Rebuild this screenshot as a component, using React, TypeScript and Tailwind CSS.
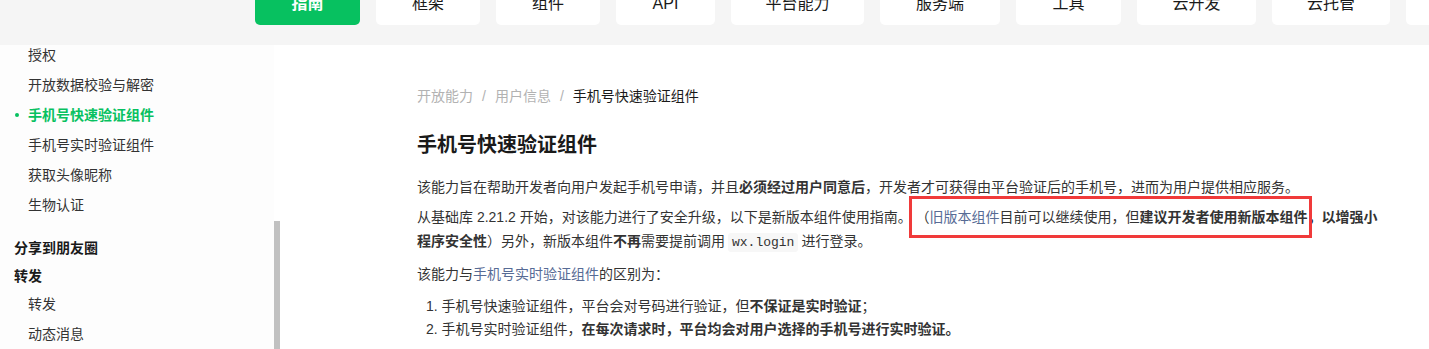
import React from "react";

const navItems = [
  { label: "指南", w: "w-[105px]", active: true },
  { label: "框架", w: "w-[104px]" },
  { label: "组件", w: "w-[104px]" },
  { label: "API", w: "w-[99px]" },
  { label: "平台能力", w: "w-[133px]" },
  { label: "服务端", w: "w-[120px]" },
  { label: "工具", w: "w-[105px]" },
  { label: "云开发", w: "w-[119px]" },
  { label: "云托管", w: "w-[118px]" },
  { label: "", w: "w-[60px]" },
];

// 侧边栏项目
const SideItem = ({ label, active }: { label: string; active?: boolean }) => (
  <div className="relative flex h-[30px] items-center pl-[28px]">
    {active && <span className="absolute left-[15px] h-[4px] w-[4px] rounded-full bg-[#07c160]" />}
    <span className={active ? "font-bold text-[#07c160]" : "text-[#333]"}>{label}</span>
  </div>
);

export default function App() {
  return (
    <div className="h-[349px] overflow-hidden bg-white font-['Liberation_Sans','Noto_Sans_CJK_SC',sans-serif] text-[14px]">
      {/* 顶部导航 */}
      <div className="h-[45px] overflow-hidden bg-[#f5f5f5]">
        <div className="-mt-[17px] flex gap-[16px] pl-[255px]">
          {navItems.map((item, i) => (
            <div
              key={i}
              className={`flex h-[42px] shrink-0 items-center justify-center rounded-[5px] text-[16px] ${item.w} ${
                item.active ? "bg-[#07c160] font-bold text-white" : "bg-white text-[#1a1a1a]"
              }`}
            >
              {item.label}
            </div>
          ))}
        </div>
      </div>

      <div className="flex">
        {/* 侧边栏 */}
        <div className="flex h-[304px] shrink-0">
          <div className="w-[274px] overflow-hidden bg-[#fdfdfd]">
            <div className="-mt-[5px]">
              <SideItem label="授权" />
              <SideItem label="开放数据校验与解密" />
              <SideItem label="手机号快速验证组件" active />
              <SideItem label="手机号实时验证组件" />
              <SideItem label="获取头像昵称" />
              <SideItem label="生物认证" />
              <div className="mt-[13px] flex h-[30px] items-center pl-[14px] font-bold text-[#1a1a1a]">分享到朋友圈</div>
              <div className="flex h-[26px] items-center pl-[14px] font-bold text-[#1a1a1a]">转发</div>
              <SideItem label="转发" />
              <SideItem label="动态消息" />
            </div>
          </div>
          <div className="flex w-[6px] flex-col bg-white">
            <div className="mt-[176px] flex-1 bg-[#c1c1c1]" />
          </div>
        </div>

        {/* 正文 */}
        <div className="w-[1103px] pl-[137px] pt-[40px] text-[#333]">
          <div className="w-[962px]">
            <div className="flex h-[22px] items-center">
              <span className="text-[#b2b2b2]">开放能力</span>
              <span className="mx-[9px] text-[#b2b2b2]">/</span>
              <span className="text-[#b2b2b2]">用户信息</span>
              <span className="mx-[9px] text-[#b2b2b2]">/</span>
              <span className="text-[#1a1a1a]">手机号快速验证组件</span>
            </div>

            <h1 className="mt-[24px] text-[20px] font-bold leading-[28px] text-[#1a1a1a]">手机号快速验证组件</h1>

            <p className="mt-[16px] leading-[24px]">
              该能力旨在帮助开发者向用户发起手机号申请，并且<b>必须经过用户同意后</b>
              ，开发者才可获得由平台验证后的手机号，进而为用户提供相应服务。
            </p>

            <p className="relative mt-[6px] leading-[24px]">
              从基础库 2.21.2 开始，对该能力进行了安全升级，以下是新版本组件使用指南。 （
              <span className="text-[#576b95]">旧版本组件</span>目前可以继续使用，但
              <b>建议开发者使用新版本组件，以增强小程序安全性</b>）另外，新版本组件<b>不再</b>需要提前调用
              <code className="mx-[3px] rounded-[3px] bg-[#f7f7f7] px-[4px] py-[2px] font-['Liberation_Mono',monospace] text-[13px]">
                wx.login
              </code>
              进行登录。
              <span className="pointer-events-none absolute left-[492px] top-[-9px] h-[42px] w-[403px] border-[3px] border-[#f03a3a]" />
            </p>

            <p className="mt-[7px] leading-[24px]">
              该能力与<span className="text-[#576b95]">手机号实时验证组件</span>的区别为：
            </p>

            <div className="mt-[9px] pl-[9px] leading-[23px]">
              <div>
                1. 手机号快速验证组件，平台会对号码进行验证，但<b>不保证是实时验证</b>；
              </div>
              <div>
                2. 手机号实时验证组件，<b>在每次请求时，平台均会对用户选择的手机号进行实时验证。</b>
              </div>
            </div>
          </div>
        </div>
      </div>
    </div>
  );
}
